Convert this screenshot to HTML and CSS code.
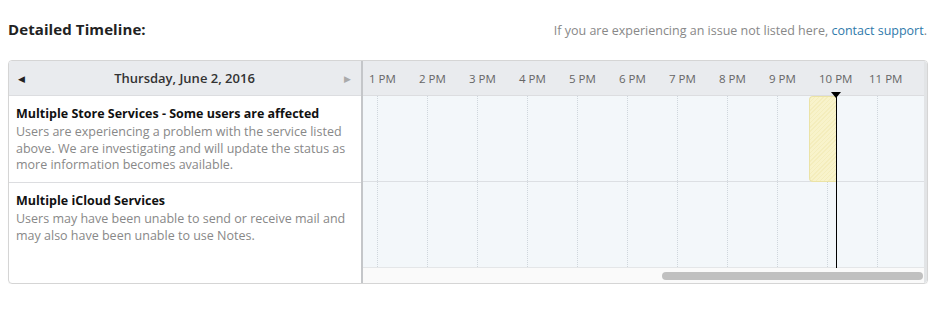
FILE: index.html
```html
<!DOCTYPE html>
<html>
<head>
<meta charset="utf-8">
<link rel="stylesheet" href="styles.css">
</head>
<body>
<div class="page">
  <div class="top">
    <h2 class="heading">Detailed Timeline:</h2>
    <p class="note">If you are experiencing an issue not listed here, <a class="link" href="#">contact support</a>.</p>
  </div>
  <div class="timeline">
    <div class="events">
      <div class="date-bar">
        <span class="arrow arrow-prev">&#9664;</span>
        <span class="date">Thursday, June 2, 2016</span>
        <span class="arrow arrow-next">&#9654;</span>
      </div>
      <div class="event">
        <div class="event-title">Multiple Store Services - Some users are affected</div>
        <div class="event-desc">Users are experiencing a problem with the service listed above. We are investigating and will update the status as more information becomes available.</div>
      </div>
      <div class="event event-last">
        <div class="event-title">Multiple iCloud Services</div>
        <div class="event-desc">Users may have been unable to send or receive mail and may also have been unable to use Notes.</div>
      </div>
    </div>
    <div class="chart">
      <div class="hours">
        <span class="hour">1 PM</span>
        <span class="hour">2 PM</span>
        <span class="hour">3 PM</span>
        <span class="hour">4 PM</span>
        <span class="hour">5 PM</span>
        <span class="hour">6 PM</span>
        <span class="hour">7 PM</span>
        <span class="hour">8 PM</span>
        <span class="hour">9 PM</span>
        <span class="hour">10 PM</span>
        <span class="hour">11 PM</span>
      </div>
      <div class="lanes">
        <div class="lane"><span class="col"></span><span class="col"></span><span class="col"></span><span class="col"></span><span class="col"></span><span class="col"></span><span class="col"></span><span class="col"></span><span class="col"></span><span class="col"></span><span class="col"></span></div>
        <div class="lane lane-last"><span class="col"></span><span class="col"></span><span class="col"></span><span class="col"></span><span class="col"></span><span class="col"></span><span class="col"></span><span class="col"></span><span class="col"></span><span class="col"></span><span class="col"></span></div>
        <div class="incident"></div>
        <div class="now"><span class="now-mark"></span></div>
      </div>
      <div class="scroll">
        <div class="thumb"></div>
      </div>
    </div>
  </div>
</div>
</body>
</html>
```
FILE: styles.css
```css
* { box-sizing: border-box; }
html, body { margin: 0; padding: 0; background: #fff; }
body {
  font-family: "Open Sans", "DejaVu Sans", sans-serif;
  color: #333;
}
.page { padding: 0 16px 0 8px; }
.top {
  display: flex;
  justify-content: space-between;
  align-items: baseline;
  height: 60px;
  padding-top: 19px;
}
.heading {
  margin: 0;
  font-size: 15px;
  font-weight: 700;
  color: #222;
  letter-spacing: 0.1px;
}
.note {
  margin: 0 1px 0 0;
  font-size: 12.5px;
  color: #888;
}
.link { color: #2f7aab; text-decoration: none; }

.timeline {
  display: grid;
  grid-template-columns: 354px 1fr;
  border: 1px solid #d5d5d5;
  border-radius: 4px;
  overflow: hidden;
  height: 224px;
  box-shadow: 0 1px 1px rgba(0,0,0,0.04);
}
.events {
  display: flex;
  flex-direction: column;
  border-right: 2px solid #c4c6c9;
}
.date-bar {
  height: 35px;
  background: #e9ebee;
  border-bottom: 1px solid #dcdde0;
  display: flex;
  align-items: center;
  padding: 0 10px 0 9px;
}
.arrow { font-size: 9px; width: 12px; }
.arrow-prev { color: #222; }
.arrow-next { color: #aaa; text-align: right; }
.date {
  flex: 1;
  text-align: center;
  font-size: 13px;
  font-weight: 600;
  color: #333;
}
.event {
  height: 87px;
  padding: 7px 8px 0 7px;
  border-bottom: 1px solid #dcdde0;
}
.event-last { border-bottom: 0; flex: 1; }
.event-title {
  font-size: 12.5px;
  font-weight: 700;
  color: #111;
  line-height: 21px;
}
.event-desc {
  font-size: 12.5px;
  line-height: 16.5px;
  color: #888;
}

.chart {
  display: flex;
  flex-direction: column;
  background: #fff;
  min-width: 0;
  border-right: 3px solid #e2e4e6;
}
.hours {
  height: 35px;
  background: #e9ebee;
  border-bottom: 1px solid #dcdde0;
  display: flex;
  align-items: center;
  padding-left: 6px;
  overflow: hidden;
}
.hour {
  flex: 0 0 50px;
  font-size: 11.5px;
  color: #666;
}
.lanes {
  position: relative;
  height: 172px;
  background: #f3f7fa;
  overflow: visible;
}
.lane {
  height: 86px;
  display: flex;
  padding-left: 14px;
  border-bottom: 1px solid #dcdfe3;
  overflow: hidden;
}
.lane-last { height: 86px; border-bottom: 1px solid #e4e6e8; }
.col {
  flex: 0 0 50px;
  border-left: 1px dotted #cfd6dc;
}
.incident {
  position: absolute;
  left: 446px;
  top: 0;
  width: 28px;
  height: 86px;
  border: 1px solid #ebe3a6;
  border-right: 0;
  border-radius: 4px 0 0 4px;
  background-color: #f8f3cb;
  background-image: repeating-linear-gradient(135deg, rgba(225,210,120,0.18) 0 1px, transparent 1px 3px);
}
.now {
  position: absolute;
  left: 473px;
  top: -4px;
  width: 1px;
  height: 176px;
  background: #000;
}
.now-mark {
  position: absolute;
  left: -5px;
  top: 0;
  width: 0;
  height: 0;
  border-left: 5.5px solid transparent;
  border-right: 5.5px solid transparent;
  border-top: 6px solid #000;
}
.scroll {
  flex: 1;
  background: #fafafa;
  display: flex;
  align-items: center;
  justify-content: flex-end;
  padding-right: 1px;
}
.thumb {
  width: 261px;
  height: 8px;
  border-radius: 4px;
  background: #c0c0c0;
}
```
